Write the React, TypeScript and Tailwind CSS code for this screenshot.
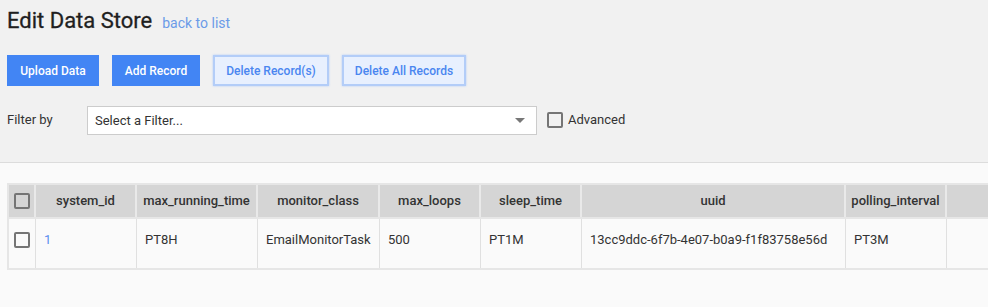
import React from 'react';

const columns = [
  { key: 'system_id', width: 'w-[101px]' },
  { key: 'max_running_time', width: 'w-[121px]' },
  { key: 'monitor_class', width: 'w-[122px]' },
  { key: 'max_loops', width: 'w-[101px]' },
  { key: 'sleep_time', width: 'w-[101px]' },
  { key: 'uuid', width: 'w-[264px]' },
  { key: 'polling_interval', width: 'w-[101px]' },
  { key: '', width: 'w-[120px]' },
];

const row: Record<string, string> = {
  system_id: '1',
  max_running_time: 'PT8H',
  monitor_class: 'EmailMonitorTask',
  max_loops: '500',
  sleep_time: 'PT1M',
  uuid: '13cc9ddc-6f7b-4e07-b0a9-f1f83758e56d',
  polling_interval: 'PT3M',
};

function Checkbox() {
  return <span className="block w-4 h-4 border-2 border-[#757575] rounded-[2px] bg-transparent" />;
}

export default function App() {
  return (
    <div className="w-[988px] h-[307px] overflow-hidden bg-[#fafafa] font-['Roboto',sans-serif] text-[#333]">
      <div className="bg-[#f1f1f1] border-b border-[#dcdcdc] h-[163px] px-[7px] pt-[7px]">
        <div className="flex items-baseline gap-[10px] h-[28px]">
          <h1 className="text-[22px] leading-[28px] text-[#1f1f1f] [-webkit-text-stroke:0.3px_#1f1f1f]">Edit Data Store</h1>
          <a className="text-[14px] text-[#6b9be8]">back to list</a>
        </div>

        <div className="flex gap-[13px] mt-[20px]">
          <button className="h-[31px] w-[92px] bg-[#4285f4] text-white text-[12px] font-medium">Upload Data</button>
          <button className="h-[31px] w-[88px] bg-[#4285f4] text-white text-[12px] font-medium">Add Record</button>
          <button className="h-[31px] w-[116px] bg-[#e8f0fe] text-[#4a86f0] text-[12px] font-medium border-2 border-[#b3cdf8] shadow-[0_0_2px_#b3cdf8]">
            Delete Record(s)
          </button>
          <button className="h-[31px] w-[124px] bg-[#e8f0fe] text-[#4a86f0] text-[12px] font-medium border-2 border-[#b3cdf8] shadow-[0_0_2px_#b3cdf8]">
            Delete All Records
          </button>
        </div>

        <div className="flex items-center mt-[20px] h-[29px]">
          <span className="w-[80px] text-[13px] text-[#333] -mt-[2px]">Filter by</span>
          <div className="w-[450px] h-[29px] bg-white border border-[#cccccc] flex items-center justify-between pl-[7px] pr-[11px]">
            <span className="text-[13px] text-[#333]">Select a Filter...</span>
            <span className="w-0 h-0 border-l-[5px] border-r-[5px] border-t-[5px] border-l-transparent border-r-transparent border-t-[#777]" />
          </div>
          <div className="flex items-center ml-[10px] gap-[5px] -mt-[2px]">
            <Checkbox />
            <span className="text-[13px] text-[#333]">Advanced</span>
          </div>
        </div>
      </div>

      <div className="ml-[7px] mt-[20px] w-[1200px] border-2 border-[#e6e6e6]">
        <div className="flex h-[32px] bg-[#d5d5d5] border-b-2 border-[#e6e6e6] box-content">
          <div className="w-[27px] shrink-0 border-r-2 border-[#e9e9e9] flex items-center justify-center">
            <Checkbox />
          </div>
          {columns.map((c, i) => (
            <div
              key={i}
              className={`${c.width} shrink-0 border-r-2 border-[#e9e9e9] flex items-center justify-center text-[13px] font-medium text-[#333]`}
            >
              {c.key}
            </div>
          ))}
        </div>
        <div className="flex h-[49px] bg-[#fafafa]">
          <div className="w-[27px] shrink-0 border-r border-[#e0e0e0] flex justify-center pt-[13px]">
            <Checkbox />
          </div>
          {columns.map((c, i) => (
            <div
              key={i}
              className={`${c.width} shrink-0 border-r border-[#e0e0e0] pl-[8px] pt-[11px] text-[13px] leading-[20px] ${
                c.key === 'system_id' ? 'text-[#5b8def]' : 'text-[#333]'
              }`}
            >
              {c.key ? row[c.key] : ''}
            </div>
          ))}
        </div>
      </div>
    </div>
  );
}
